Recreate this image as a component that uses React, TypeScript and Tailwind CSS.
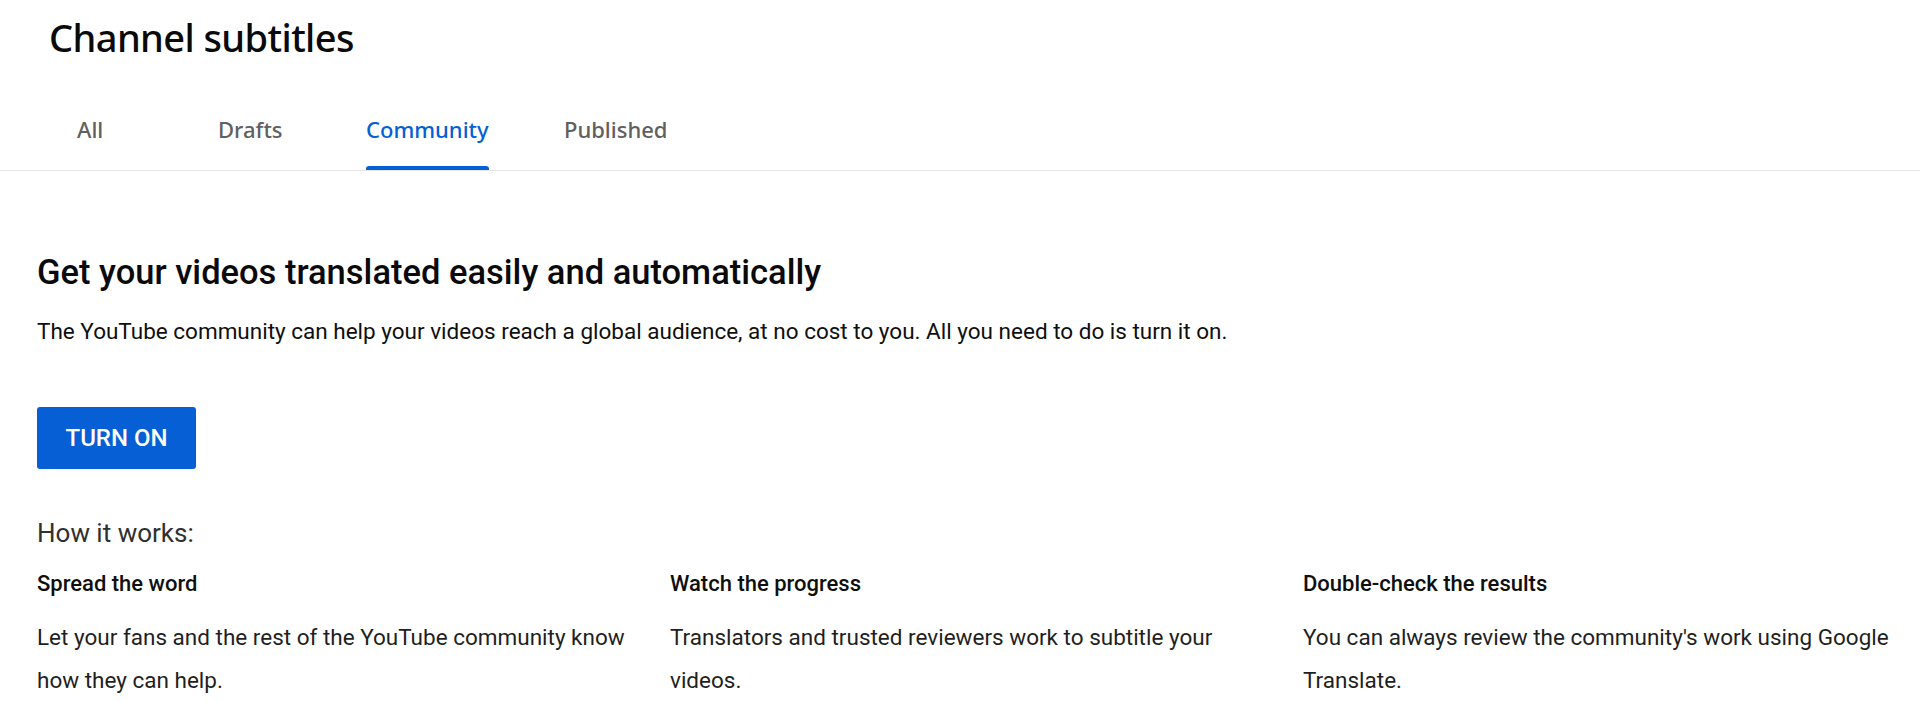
import React from 'react';

const tabs = [
  { label: 'All', width: 'w-[141px]', active: false },
  { label: 'Drafts', width: 'w-[148px]', active: false },
  { label: 'Community', width: 'w-[198px]', active: true },
  { label: 'Published', width: 'w-[160px]', active: false },
];

const steps = [
  {
    title: 'Spread the word',
    description: 'Let your fans and the rest of the YouTube community know how they can help.',
  },
  {
    title: 'Watch the progress',
    description: 'Translators and trusted reviewers work to subtitle your videos.',
  },
  {
    title: 'Double-check the results',
    description: "You can always review the community's work using Google Translate.",
  },
];

export default function App() {
  return (
    <div className="w-[1920px] h-[701px] overflow-hidden bg-white font-['Roboto',sans-serif] text-[#0f0f0f]">
      <div className="pl-[49px] pt-[14px]">
        <h1 className="font-['Noto_Sans',sans-serif] text-[38px] leading-[46px] font-medium tracking-[-0.6px] text-[#0a0a0a]">
          Channel subtitles
        </h1>
      </div>

      <div className="mt-[55px] border-b border-[#e5e5e5]">
        <div className="flex pl-[77px]">
          {tabs.map((tab) => (
            <div key={tab.label} className={`${tab.width} flex`}>
              <div className="flex flex-col items-stretch">
                <span
                  className={`font-['Noto_Sans',sans-serif] text-[22px] leading-[28px] font-medium ${
                    tab.active ? 'text-[#065fd4]' : 'text-[#606060]'
                  }`}
                >
                  {tab.label}
                </span>
                <div
                  className={`mt-[23px] h-[4px] rounded-t-[3px] ${tab.active ? 'bg-[#065fd4]' : 'bg-transparent'}`}
                />
              </div>
            </div>
          ))}
        </div>
      </div>

      <div className="pl-[37px]">
        <h2 className="mt-[81px] text-[34.5px] leading-[40px] font-medium text-[#0a0a0a]">
          Get your videos translated easily and automatically
        </h2>
        <p className="mt-[25px] text-[22.5px] leading-[28px] text-[#0f0f0f]">
          The YouTube community can help your videos reach a global audience, at no cost to you. All you need to do is turn it on.
        </p>

        <button className="mt-[62px] w-[159px] h-[62px] rounded-[3px] bg-[#065fd4] text-white text-[24px] font-medium">
          TURN ON
        </button>

        <p className="mt-[48px] text-[26px] leading-[32px] text-[#303030]">How it works:</p>

        <div className="mt-[21px] grid grid-cols-[633px_633px_1fr]">
          {steps.map((step) => (
            <div key={step.title} className="pr-[28px]">
              <h3 className="text-[22px] leading-[28px] font-medium text-[#0f0f0f]">{step.title}</h3>
              <p className="mt-[18px] text-[22.5px] leading-[43px] text-[#1f1f1f]">{step.description}</p>
            </div>
          ))}
        </div>
      </div>
    </div>
  );
}
